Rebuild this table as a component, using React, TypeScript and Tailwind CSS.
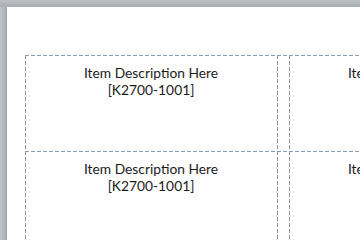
import React from "react";

const dashed =
  "bg-[repeating-linear-gradient(90deg,#8597b1_0_4px,transparent_4px_6px),repeating-linear-gradient(180deg,#8597b1_0_4px,transparent_4px_6px)] bg-no-repeat bg-[length:100%_1px,1px_100%] bg-[position:0_0,0_0]";

function Label() {
  return (
    <div className={`${dashed} h-[96px] pt-[9px] text-center text-[13.8px] leading-[17px] text-[#1b1b1b]`}>
      <div>Item Description Here</div>
      <div>[K2700-1001]</div>
    </div>
  );
}

function Spacer() {
  return <div className={`${dashed} h-[96px]`} />;
}

export default function App() {
  const rows = [0, 1];
  return (
    <div
      className="w-[360px] h-[240px] overflow-hidden bg-[#b6b9bd] flex flex-col"
      style={{ fontFamily: "Lato, 'Open Sans', sans-serif" }}
    >
      <div className="h-[7px] shrink-0 bg-gradient-to-b from-[#bcbfc3] to-[#a9acb0]" />
      <div className="flex flex-1 min-h-0">
        <div className="w-[7px] shrink-0 bg-gradient-to-r from-[#c3c6ca] via-[#b8bbbf] to-[#9fa2a6]" />
        <div className="flex-1 bg-white pt-[48px] pl-[18px] overflow-hidden">
          <div className="grid grid-cols-[252px_12px_252px] w-[516px]">
            {rows.map((r) => (
              <React.Fragment key={r}>
                <Label />
                <Spacer />
                <Label />
              </React.Fragment>
            ))}
          </div>
        </div>
      </div>
    </div>
  );
}
